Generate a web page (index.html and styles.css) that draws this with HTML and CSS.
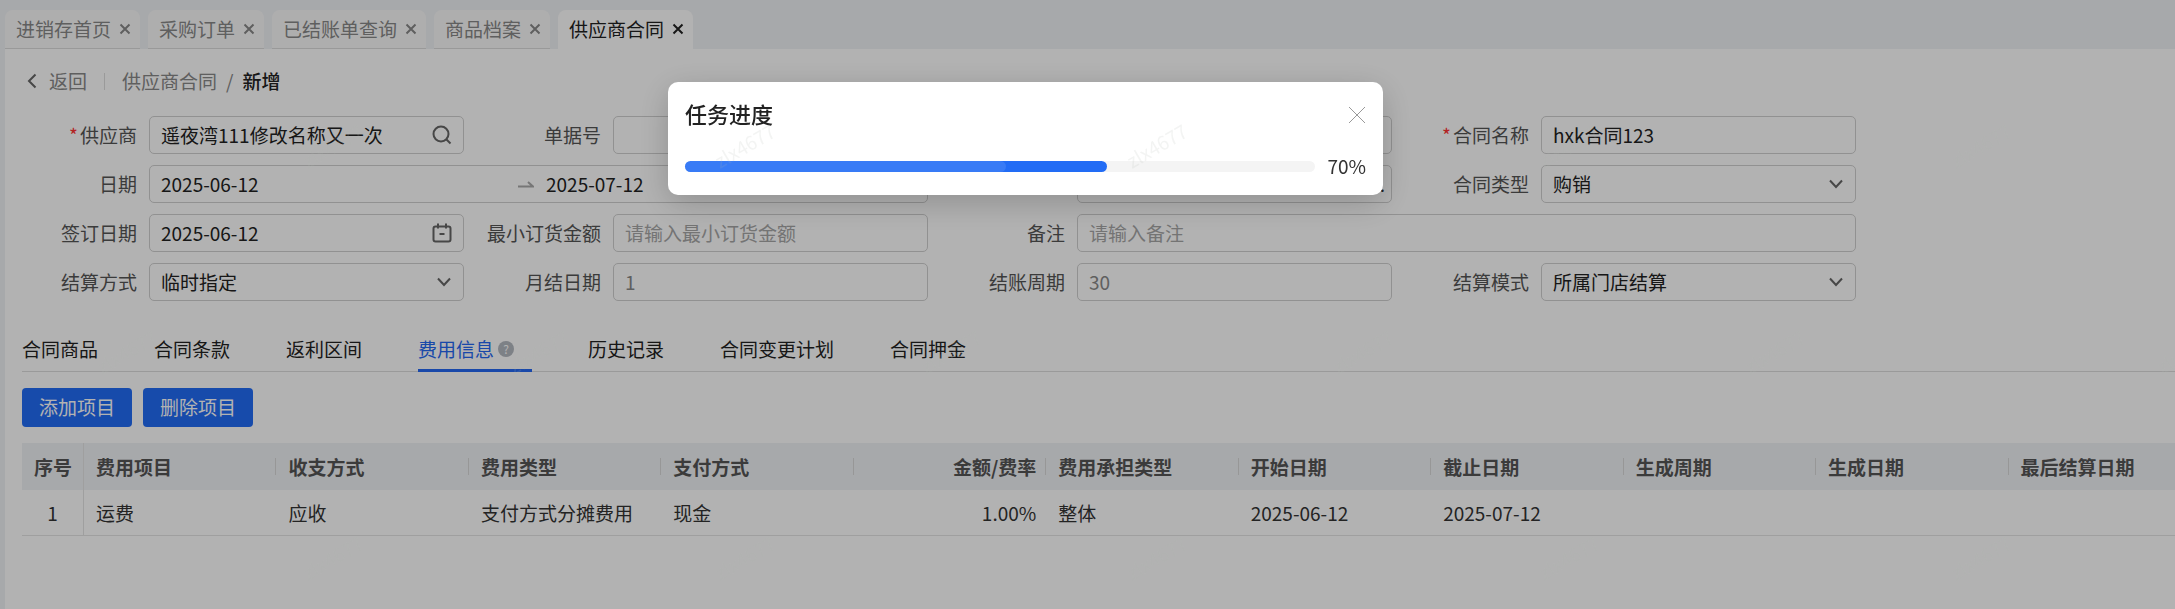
FILE: index.html
```html
<!DOCTYPE html>
<html lang="zh-CN">
<head>
<meta charset="utf-8">
<title>供应商合同</title>
<link rel="stylesheet" href="styles.css">
</head>
<body>
<div class="app">
  <nav class="tabs">
    <div class="tab"><a href="#">进销存首页</a><button class="tab-close" aria-label="关闭"><svg viewBox="0 0 12 12"><path d="M1.500 1.500l9 9M10.500 1.500l-9 9"/></svg></button></div>
    <div class="tab"><a href="#">采购订单</a><button class="tab-close" aria-label="关闭"><svg viewBox="0 0 12 12"><path d="M1.500 1.500l9 9M10.500 1.500l-9 9"/></svg></button></div>
    <div class="tab"><a href="#">已结账单查询</a><button class="tab-close" aria-label="关闭"><svg viewBox="0 0 12 12"><path d="M1.500 1.500l9 9M10.500 1.500l-9 9"/></svg></button></div>
    <div class="tab"><a href="#">商品档案</a><button class="tab-close" aria-label="关闭"><svg viewBox="0 0 12 12"><path d="M1.500 1.500l9 9M10.500 1.500l-9 9"/></svg></button></div>
    <div class="tab tab-active"><a href="#">供应商合同</a><button class="tab-close" aria-label="关闭"><svg viewBox="0 0 12 12"><path d="M1.500 1.500l9 9M10.500 1.500l-9 9"/></svg></button></div>
  </nav>
  <main class="panel">
    <div class="crumbs">
      <button class="back"><svg viewBox="0 0 10 16"><path d="M8.500 1.500L2 8l6.500 6.500"/></svg>返回</button>
      <span class="crumb-line"></span>
      <a href="#">供应商合同</a><span class="slash">/</span><strong>新增</strong>
    </div>
    <form class="form">
      <div class="field"><label for="supplier"><i>*</i>供应商</label>
        <div class="control"><input id="supplier" value="遥夜湾111修改名称又一次"><svg class="icon" viewBox="0 0 20 20"><circle cx="9" cy="9" r="7.500"/><path d="M14.500 14.500l4 4"/></svg></div></div>
      <div class="field"><label for="number">单据号</label><div class="control"><input id="number"></div></div>
      <div class="field"><label for="org"></label><div class="control"><input id="org" aria-label="机构"></div></div>
      <div class="field"><label for="name"><i>*</i>合同名称</label><div class="control"><input id="name" value="hxk合同123"></div></div>

      <div class="field wide"><label for="from">日期</label>
        <div class="control range"><input id="from" value="2025-06-12"><svg class="arrow" viewBox="0 0 16 10"><path d="M0 7.500h15L10 3"/></svg><input id="to" aria-label="结束日期" value="2025-07-12"></div></div>
      <div class="field"><label for="store"></label><div class="control picker"><input id="store" aria-label="门店"><span>...</span></div></div>
      <div class="field"><label for="type">合同类型</label>
        <div class="control"><select id="type"><option>购销</option></select><svg class="chevron" viewBox="0 0 16 10"><path d="M2 1.500l6 6.500 6-6.500"/></svg></div></div>

      <div class="field"><label for="signed">签订日期</label>
        <div class="control"><input id="signed" value="2025-06-12"><svg class="icon" viewBox="0 0 20 20"><rect x="1.500" y="3.500" width="17" height="15" rx="2"/><path d="M6 0.500v5M14 0.500v5M7.500 11h5"/></svg></div></div>
      <div class="field"><label for="min">最小订货金额</label><div class="control"><input id="min" placeholder="请输入最小订货金额"></div></div>
      <div class="field wide"><label for="remark">备注</label><div class="control"><input id="remark" placeholder="请输入备注"></div></div>

      <div class="field"><label for="settle">结算方式</label>
        <div class="control"><select id="settle"><option>临时指定</option></select><svg class="chevron" viewBox="0 0 16 10"><path d="M2 1.500l6 6.500 6-6.500"/></svg></div></div>
      <div class="field"><label for="monthday">月结日期</label><div class="control"><input id="monthday" value="1" disabled></div></div>
      <div class="field"><label for="cycle">结账周期</label><div class="control"><input id="cycle" value="30" disabled></div></div>
      <div class="field"><label for="mode">结算模式</label>
        <div class="control"><select id="mode"><option>所属门店结算</option></select><svg class="chevron" viewBox="0 0 16 10"><path d="M2 1.500l6 6.500 6-6.500"/></svg></div></div>
    </form>
    <div class="sections" role="tablist">
      <button role="tab">合同商品</button>
      <button role="tab">合同条款</button>
      <button role="tab">返利区间</button>
      <button role="tab" class="current" aria-selected="true">费用信息<span class="help">?</span></button>
      <button role="tab">历史记录</button>
      <button role="tab">合同变更计划</button>
      <button role="tab">合同押金</button>
    </div>
    <div class="actions"><button>添加项目</button><button>删除项目</button></div>
    <div class="table-wrap">
      <table>
        <thead><tr><th class="index">序号</th><th>费用项目</th><th>收支方式</th><th>费用类型</th><th>支付方式</th><th class="num">金额/费率</th><th>费用承担类型</th><th>开始日期</th><th>截止日期</th><th>生成周期</th><th>生成日期</th><th>最后结算日期</th></tr></thead>
        <tbody><tr><td class="index">1</td><td>运费</td><td>应收</td><td>支付方式分摊费用</td><td>现金</td><td class="num">1.00%</td><td>整体</td><td>2025-06-12</td><td>2025-07-12</td><td></td><td></td><td></td></tr></tbody>
      </table>
    </div>
  </main>
</div>
<div class="mask">
  <section class="modal" role="dialog" aria-labelledby="modal-title">
    <header><h2 id="modal-title">任务进度</h2><button class="modal-close" aria-label="关闭"><svg viewBox="0 0 18 18"><path d="M1 1l16 16M17 1L1 17"/></svg></button></header>
    <div class="progress"><div class="track" role="progressbar" aria-valuenow="70" aria-valuemin="0" aria-valuemax="100"><div class="fill"><div class="shine"></div></div></div><span>70%</span></div>
  </section>
</div>
<svg class="watermark" aria-hidden="true">
  <defs><pattern id="mark" width="412" height="412" patternUnits="userSpaceOnUse">
    <text transform="translate(308 169) rotate(-30)">zlx4677</text>
    <text transform="translate(102 375) rotate(-30)">zlx4677</text>
  </pattern></defs>
  <rect width="100%" height="100%" fill="url(#mark)"/>
</svg>
</body>
</html>
```

FILE: styles.css
```css
* { box-sizing: border-box; }
body {
  margin: 0;
  height: 100vh;
  overflow: hidden;
  background: #f0f2f5;
  color: #333;
  font: 19px/28px "Noto Sans CJK SC", sans-serif;
}
button, input, select { font: inherit; color: inherit; }
button { padding: 0; border: 0; background: none; white-space: nowrap; }
a { color: inherit; text-decoration: none; }
svg { display: block; fill: none; stroke: currentColor; stroke-width: 2; }

.app { height: 100%; display: flex; flex-direction: column; padding: 10px 0 0 5px; }
.tabs { display: flex; gap: 8px; }
.tab {
  display: flex; align-items: center; gap: 8px;
  height: 39px; padding: 0 9px 0 11px;
  border-bottom: 1px solid #dcdcdc; border-radius: 8px 8px 0 0;
  background: #fafafa; color: #888; white-space: nowrap;
}
.tab-close svg { width: 12px; height: 12px; }
.tab-active { background: #fff; border-color: #fff; color: #222; }

.panel { flex: 1; min-height: 0; overflow: hidden; background: #fff; padding-top: 18px; }
.crumbs { display: flex; align-items: center; padding-left: 22px; color: #888; }
.back { display: flex; align-items: center; gap: 12px; }
.back svg { width: 10px; height: 16px; color: #666; }
.crumb-line { width: 1px; height: 17px; margin: 0 17px; background: #ddd; }
.slash { margin: 0 9px; }
.crumbs strong { color: #222; font-weight: 500; }

.form {
  display: grid; grid-template-columns: repeat(4, minmax(0, 1fr)); gap: 11px 17px;
  max-width: 1851px; padding: 21px 0 0 12px;
}
.field { display: flex; align-items: center; gap: 12px; }
.wide { grid-column: span 2; }
.field label { flex: 0 0 120px; text-align: right; white-space: nowrap; color: #555; }
.field i { margin-right: 2px; color: #f33; font-style: normal; }
.control {
  flex: 1; min-width: 0; height: 38px; display: flex; align-items: center;
  padding: 0 11px 1px; border: 1px solid #d0d0d0; border-radius: 5px;
}
.control input, .control select {
  flex: 1; min-width: 0; width: 0; height: 28px; padding: 0;
  border: 0; background: none; outline: 0; appearance: none; color: #222;
}
.control input::placeholder { color: #a6a6a6; opacity: 1; }
.control input:disabled { color: #888; }
.range { padding-right: 24px; }
.picker { padding-right: 6px; }
.icon { width: 20px; height: 20px; color: #666; }
.chevron { width: 16px; height: 10px; color: #666; }
.arrow { width: 16px; height: 10px; margin-right: 12px; color: #aaa; }

.sections {
  display: flex; gap: 56px; height: 42px; margin: 29px 0 0 17px;
  border-bottom: 1px solid #ddd; color: #222;
}
.sections button { display: flex; align-items: center; height: 42px; padding-bottom: 2px; border-bottom: 3px solid transparent; }
.sections .current { padding-right: 18px; color: #2468f2; border-color: #2468f2; }
.help {
  width: 16px; height: 16px; margin-left: 4px; border-radius: 50%;
  background: #b4b9c1; color: #fff; font-size: 12px; line-height: 16px; text-align: center;
}
.actions { display: flex; gap: 11px; margin: 16px 0 16px 17px; }
.actions button { height: 39px; padding: 0 17px 2px; border-radius: 4px; background: #226cf5; color: #fff; }

.table-wrap { margin-left: 17px; overflow: hidden; }
table { width: 100%; min-width: 2179px; table-layout: fixed; border-collapse: separate; border-spacing: 0; }
th, td { height: 46px; padding: 0 12px; text-align: left; white-space: nowrap; }
th { position: relative; height: 47px; background: #f0f2f5; color: #555; font-weight: 700; }
th:not(.index)::after {
  content: ""; position: absolute; right: 0; top: 15px; width: 1px; height: 17px; background: #d8d8d8;
}
td { border-bottom: 1px solid #e4e4e4; }
.index { width: 62px; text-align: center; border-right: 1px solid #e4e4e4; }
th.num, td.num { padding-right: 10px; text-align: right; }

.mask { position: fixed; inset: 0; padding: 82px 124px 0 0; background: rgba(0, 0, 0, .3); }
.modal {
  width: 715px; max-width: 100%; margin: 0 auto; padding: 16px 17px 15px; border-radius: 10px;
  background: #fff; box-shadow: 0 8px 32px rgba(0, 0, 0, .2);
}
.modal header { display: flex; align-items: center; justify-content: space-between; height: 34px; }
.modal h2 { margin: 0; padding-bottom: 3px; color: #222; font-size: 22px; line-height: 31px; font-weight: 500; }
.modal-close { color: #999; }
.modal-close svg { width: 18px; height: 18px; stroke-width: 1; }
.progress { display: flex; align-items: center; gap: 12px; padding: 20px 0 0; }
.progress span { line-height: 28px; }
.track { flex: 1; height: 11px; border-radius: 6px; background: #f4f4f4; }
.fill { width: 67%; height: 100%; border-radius: 6px; background: #226cf5; }
.shine { width: 76%; height: 100%; border-radius: 6px; background: rgba(255, 255, 255, .1); }

.watermark { position: fixed; inset: 0; width: 100%; height: 100%; pointer-events: none; stroke: none; }
.watermark text { fill: rgb(170, 178, 176); fill-opacity: .15; font-size: 19px; }
```
